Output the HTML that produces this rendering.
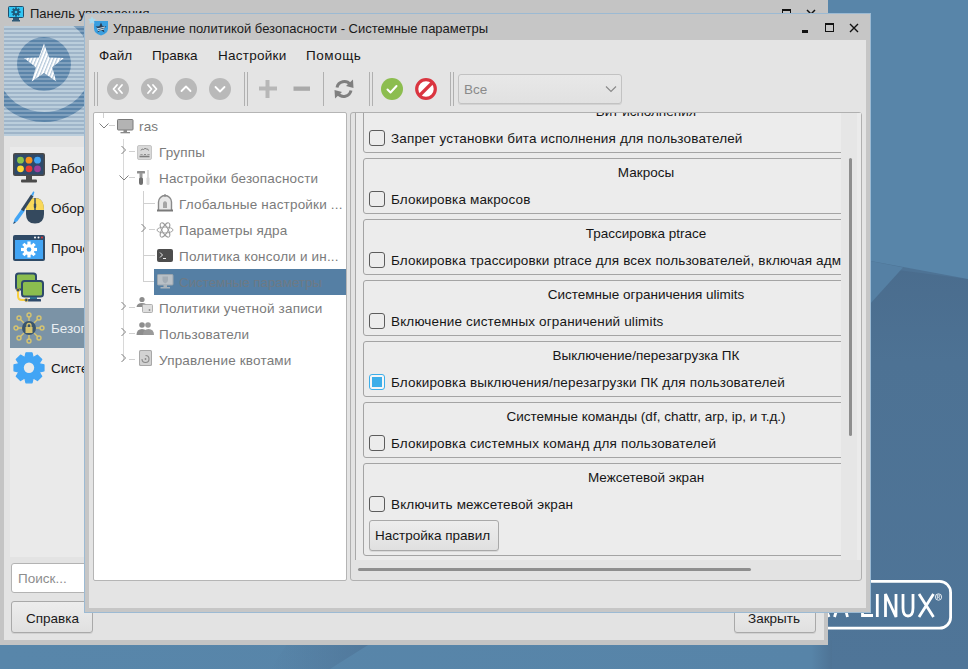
<!DOCTYPE html>
<html><head><meta charset="utf-8">
<style>
*{box-sizing:border-box;margin:0;padding:0}
html,body{width:968px;height:669px;overflow:hidden}
body{position:relative;font-family:"Liberation Sans",sans-serif;font-size:13.5px;line-height:16px;color:#161616;background:#4e7395}
.a{position:absolute}
.t{position:absolute;white-space:nowrap;line-height:16px}
.btn{position:absolute;border:1px solid #a9a9a9;border-radius:3px;background:linear-gradient(#ededed,#e0e0e0);box-shadow:0 1px 0 rgba(0,0,0,.08)}
.gb{position:absolute;left:364px;width:600px;border:1px solid #a4a4a4;border-radius:3px;background:#ececec}
.cb{position:absolute;left:369px;width:16px;height:16px;border:1px solid #5c5c5c;border-radius:3px;background:#ececec}
.tr{position:absolute;white-space:nowrap;line-height:16px;color:#7b7b7b;letter-spacing:0.18px}
.lb{letter-spacing:0.15px}
.gt{position:absolute;white-space:nowrap;line-height:16px;width:564px;text-align:center;left:364px}
</style></head><body>

<!-- desktop -->
<svg class="a" style="left:0;top:0" width="968" height="669" viewBox="0 0 968 669">
  <defs>
    <linearGradient id="dk" x1="0" y1="0" x2="0" y2="1"><stop offset="0" stop-color="#4a6c8d"/><stop offset="0.25" stop-color="#4d7294"/><stop offset="1" stop-color="#4f7598"/></linearGradient>
    <linearGradient id="bs" x1="0" y1="0" x2="1" y2="0"><stop offset="0" stop-color="#5886aa"/><stop offset="0.975" stop-color="#5784a8"/><stop offset="1" stop-color="#4e7395"/></linearGradient>
  </defs>
  <rect width="968" height="669" fill="#4e7395"/>
  <polygon points="820,260 968,279 968,669 820,669" fill="url(#dk)"/>
  <polygon points="0,0 968,0 968,279 871,261 0,150" fill="#5885a9"/>
  <polygon points="860,259 903,267.5 860,315" fill="#5580a4"/>
  <rect x="0" y="640" width="832" height="29" fill="url(#bs)"/>
  <linearGradient id="wg" x1="0" y1="0" x2="1" y2="0"><stop offset="0" stop-color="#4e7396" stop-opacity="0"/><stop offset="1" stop-color="#4e7396" stop-opacity="0.75"/></linearGradient>
  <polygon points="290,640 376,640 330,669 270,669" fill="url(#wg)"/>
</svg>
<!-- ASTRA LINUX logo -->
<svg class="a" style="left:760px;top:570px" width="208" height="70" viewBox="760 570 208 70">
  <rect x="700" y="581.4" width="250.6" height="46.8" rx="11" fill="none" stroke="#fff" stroke-width="2.8"/>
  <g stroke="#fff" stroke-width="2.8" fill="none" stroke-linejoin="miter" stroke-linecap="butt">
    <path d="M812 617 L820 594 L829 617"/>
    <path d="M834.5 617 L841.5 594.5 L847.5 617"/>
    <path d="M862.5 594 V615.5 H873"/>
    <path d="M877.3 594 V617"/>
    <path d="M885.5 617 V594 L896 617 V594"/>
    <path d="M903 594 V608 Q903 616 908 616 Q913 616 913 608 V594"/>
    <path d="M919 594 L933.5 617 M933.5 594 L919 617"/>
  </g>
  <circle cx="938.5" cy="597" r="3.2" fill="none" stroke="#fff" stroke-width="0.8"/><path d="M937.3 599 V595 H938.8 Q940 595 940 596 Q940 597 938.8 597 H937.3 M938.6 597 L940 599" stroke="#fff" stroke-width="0.7" fill="none"/>
</svg>
<!-- ============ BACK WINDOW ============ -->
<div class="a" style="left:0;top:0;width:828px;height:645px;background:#c4c4c4"></div>
<div class="a" style="left:4px;top:26px;width:820px;height:614px;background:#e3e3e3"></div>
<!-- title icon -->
<svg class="a" style="left:8px;top:6px" width="16" height="16" viewBox="0 0 16 16">
  <rect x="0.5" y="0.5" width="15" height="11" rx="1" fill="#31c6f4" stroke="#1f4f6e" stroke-width="1"/>
  <rect x="5" y="12" width="6" height="2" fill="#2f5a78"/><rect x="4" y="14" width="8" height="1.5" fill="#2f5a78"/>
  <g transform="translate(8,6)" fill="#1f5a7a"><circle r="3.2"/><rect x="-0.9" y="-4.6" width="1.8" height="9.2"/><rect x="-4.6" y="-0.9" width="9.2" height="1.8"/><rect x="-0.9" y="-4.6" width="1.8" height="9.2" transform="rotate(45)"/><rect x="-0.9" y="-4.6" width="1.8" height="9.2" transform="rotate(-45)"/><circle r="1.3" fill="#31c6f4"/></g>
</svg>
<div class="t" style="left:30px;top:6px;color:#1a1a1a;font-size:13px">Панель управления</div>
<!-- titlebar buttons (back) -->
<div class="a" style="left:782px;top:9px;width:9px;height:9px;border:1px solid #111;border-top-width:2px"></div>
<svg class="a" style="left:806px;top:9px" width="10" height="10"><path d="M1 1L9 9M9 1L1 9" stroke="#111" stroke-width="1.5"/></svg>

<!-- banner -->
<div class="a" style="left:4px;top:26px;width:100px;height:110px;overflow:hidden;background:repeating-linear-gradient(180deg,#bbcedc 0,#bbcedc 2px,#9fb5c9 2px,#9fb5c9 4px)">
  <svg class="a" style="left:0;top:0" width="100" height="109" viewBox="0 0 100 109">
    <defs>
      <pattern id="hs" width="4" height="4" patternUnits="userSpaceOnUse"><rect width="4" height="2" fill="#7fa0bd"/><rect y="2" width="4" height="2" fill="#5b84a9"/></pattern>
      <pattern id="ds" width="3.2" height="3.2" patternUnits="userSpaceOnUse" patternTransform="rotate(22)"><rect width="3.2" height="3.2" fill="#fff"/><rect width="1.2" height="3.2" fill="#b4c8da"/></pattern>
    </defs>
    <path d="M66.5 -7.9 A53 53 0 1 1 -12.2 28.8" fill="none" stroke="url(#hs)" stroke-width="10"/>
    <circle cx="40" cy="38" r="27" fill="url(#hs)"/>
    <polygon points="40.0,17.5 45.1,31.5 60.0,32.0 48.2,41.2 52.3,55.5 40.0,47.1 27.7,55.5 31.8,41.2 20.0,32.0 34.9,31.5" fill="url(#ds)"/>
  </svg>
</div>
<!-- sidebar panel -->
<div class="a" style="left:10px;top:147px;width:90px;height:410px;background:#eaeaea"></div>
<!-- sidebar icons -->
<svg class="a" style="left:13px;top:153px" width="32" height="32" viewBox="0 0 32 32">
  <rect x="0" y="0" width="32" height="23" rx="2" fill="#4b4b4b"/>
  <rect x="1.6" y="1.6" width="28.8" height="19.8" rx="0.8" fill="#2e4a6b"/>
  <rect x="13" y="23" width="6" height="4.5" fill="#4b4b4b"/><rect x="8" y="26.5" width="16" height="3" rx="1" fill="#4b4b4b"/>
  <circle cx="7.5" cy="7.2" r="3.4" fill="#8bc34a"/><circle cx="16" cy="7.2" r="3.4" fill="#f7931e"/><circle cx="24.5" cy="7.2" r="3.4" fill="#42a5f5"/>
  <circle cx="7.5" cy="15.8" r="3.4" fill="#fdd835"/><circle cx="16" cy="15.8" r="3.4" fill="#e53935"/><circle cx="24.5" cy="15.8" r="3.4" fill="#9b3f9b"/>
</svg>
<div class="t" style="left:51px;top:161px">Рабочий стол</div>
<svg class="a" style="left:10px;top:188px" width="40" height="40" viewBox="10 188 40 40">
  <path d="M26 211 Q26 198 35 198 Q44 198 44 211 V214 Q44 223.5 35 223.5 Q26 223.5 26 214 Z" fill="#34495e"/>
  <path d="M26 210 Q26 198 35 198 Q44 198 44 210 Z" fill="#f9d85a"/>
  <rect x="34.3" y="198" width="1.4" height="12" fill="#34495e"/><rect x="33.8" y="203.5" width="2.4" height="4.5" rx="1" fill="#34495e"/>
  <path d="M13.2 224 L14.5 219 L22 208.5 L25 210.5 L17.5 221 Z" fill="#42a5f5"/>
  <path d="M13.2 224 L14.2 221.5 L15.8 222.6 Z" fill="#34495e"/>
  <path d="M21 209.5 L31 194.5 L33.5 196.3 L23.6 211.3 Z" fill="#34495e"/>
  <path d="M31.2 194.8 L33.2 191.5 Q34.3 191 34.3 192.5 L33.2 196 Z" fill="#42a5f5"/>
</svg>
<div class="t" style="left:51px;top:201px">Оборудование</div>
<svg class="a" style="left:13px;top:235px" width="32" height="26" viewBox="0 0 32 26">
  <rect x="0" y="0" width="32" height="26" rx="2" fill="#2f4a66"/>
  <rect x="2" y="5" width="28" height="19" fill="#42a5f5"/>
  <circle cx="22" cy="2.5" r="1" fill="#fff"/><circle cx="25.5" cy="2.5" r="1" fill="#fff"/><circle cx="29" cy="2.5" r="1" fill="#e53935"/>
  <g transform="translate(16,14.5)" fill="#fff"><circle r="5.5"/><g id="teeth"><rect x="-1.6" y="-8" width="3.2" height="4"/><rect x="-1.6" y="4" width="3.2" height="4"/><rect x="-8" y="-1.6" width="4" height="3.2"/><rect x="4" y="-1.6" width="4" height="3.2"/></g><g transform="rotate(45)"><rect x="-1.6" y="-8" width="3.2" height="4"/><rect x="-1.6" y="4" width="3.2" height="4"/><rect x="-8" y="-1.6" width="4" height="3.2"/><rect x="4" y="-1.6" width="4" height="3.2"/></g><circle r="2.3" fill="#42a5f5"/></g>
</svg>
<div class="t" style="left:51px;top:241px">Прочее</div>
<svg class="a" style="left:10px;top:268px" width="40" height="40" viewBox="10 268 40 40">
  <path d="M18 290 V296 Q18 300 22 300 H27" stroke="#f9d040" stroke-width="2" fill="none"/>
  <rect x="16" y="273.5" width="20" height="16" rx="2.5" fill="#8bbd4f" stroke="#2e4a6b" stroke-width="2"/>
  <rect x="22" y="281" width="21" height="15.5" rx="2.5" fill="#8bbd4f" stroke="#2e4a6b" stroke-width="2"/>
  <rect x="30" y="297" width="7" height="2.5" fill="#2f6f8f"/><rect x="28" y="299" width="13" height="2.5" rx="0.5" fill="#2e4a6b"/>
  <circle cx="18" cy="290" r="1.6" fill="#2e4a6b" stroke="#c9a93a" stroke-width="0.7"/><circle cx="26.3" cy="300" r="1.6" fill="#2e4a6b" stroke="#c9a93a" stroke-width="0.7"/>
</svg>
<div class="t" style="left:51px;top:281px">Сеть</div>
<div class="a" style="left:10px;top:308px;width:90px;height:40px;background:#7b93a6"></div>
<svg class="a" style="left:13px;top:312px" width="32" height="32" viewBox="0 0 32 32">
  <g stroke="#d6c470" stroke-width="1.4" fill="none">
    <path d="M16 4V10M16 22V28M4 16H10M22 16H28M7 7L11 11M25 7L21 11M7 25L11 21M25 25L21 21"/>
    <circle cx="16" cy="3" r="2"/><circle cx="16" cy="29" r="2"/><circle cx="3" cy="16" r="2"/><circle cx="29" cy="16" r="2"/>
    <circle cx="6" cy="6" r="2"/><circle cx="26" cy="6" r="2"/><circle cx="6" cy="26" r="2"/><circle cx="26" cy="26" r="2"/>
  </g>
  <circle cx="16" cy="16" r="7" fill="#3a556e"/>
  <rect x="12.5" y="15" width="7" height="6" fill="#d6c470"/><path d="M14 15V13.5A2 2 0 0 1 18 13.5V15" stroke="#d6c470" stroke-width="1.3" fill="none"/>
</svg>
<div class="t" style="left:51px;top:321px;color:#e9eef2">Безопасность</div>
<svg class="a" style="left:8px;top:348px" width="42" height="42" viewBox="8 348 42 42">
  <polygon points="24.95,357.04 25.96,352.80 32.04,352.80 33.05,357.04 33.75,357.32 37.45,355.05 41.75,359.35 39.48,363.05 39.76,363.75 44.00,364.76 44.00,370.84 39.76,371.85 39.48,372.55 41.75,376.25 37.45,380.55 33.75,378.28 33.05,378.56 32.04,382.80 25.96,382.80 24.95,378.56 24.25,378.28 20.55,380.55 16.25,376.25 18.52,372.55 18.24,371.85 14.00,370.84 14.00,364.76 18.24,363.75 18.52,363.05 16.25,359.35 20.55,355.05 24.25,357.32" fill="#42a5f5" stroke="#42a5f5" stroke-width="1.2" stroke-linejoin="round"/>
  <circle cx="29" cy="367.8" r="5.2" fill="#eaeaea"/>
</svg>
<div class="t" style="left:51px;top:361px">Системные</div>
<!-- search -->
<div class="a" style="left:11px;top:563px;width:110px;height:30px;background:#fff;border:1px solid #b3b3b3;border-radius:3px"></div>
<div class="t" style="left:18px;top:571px;color:#8d8d8d">Поиск...</div>
<div class="btn" style="left:11px;top:601px;width:82px;height:32px"></div>
<div class="t" style="left:26px;top:611px;color:#1a1a1a">Справка</div>
<div class="btn" style="left:734px;top:601px;width:82px;height:32px"></div>
<div class="t" style="left:748px;top:611px;color:#1a1a1a">Закрыть</div>

<!-- ============ FRONT WINDOW ============ -->
<div class="a" style="left:84px;top:13px;width:787px;height:600px;background:#c6c6c6;border:1px solid #9cbad3"></div>
<div class="a" style="left:89px;top:40px;width:777px;height:568px;background:#e4e4e4"></div>
<!-- icon -->
<svg class="a" style="left:88px;top:16px" width="22" height="20" viewBox="0 0 22 20">
  <path d="M6 5 H20 V12.5 Q20 17.5 13 19.5 Q6 17.5 6 12.5 Z" fill="#3a9fe0"/>
  <polygon points="13,6.5 14.6,10.3 18.5,10.4 15.4,12.8 16.5,16.5 13,14.3 9.5,16.5 10.6,12.8 7.5,10.4 11.4,10.3" fill="#2b3f55"/>
  <path d="M9 13 L17 11 M10 14.5 L16 13" stroke="#e8eef4" stroke-width="0.9"/>
  <polygon points="4.00,0.90 5.06,3.04 7.42,3.39 5.71,5.06 6.12,7.41 4.00,6.30 1.88,7.41 2.29,5.06 0.58,3.39 2.94,3.04" fill="#a9dcf2" stroke="#a9dcf2" stroke-width="0.6" stroke-linejoin="round"/>
</svg>
<div class="t" style="left:113px;top:21px;color:#1a1a1a;font-size:13px">Управление политикой безопасности - Системные параметры</div>
<div class="a" style="left:802px;top:30px;width:6px;height:2.5px;background:#111"></div>
<div class="a" style="left:825px;top:23px;width:9px;height:9px;border:1px solid #111;border-top-width:2px"></div>
<svg class="a" style="left:849px;top:23px" width="10" height="10"><path d="M1 1L9 9M9 1L1 9" stroke="#111" stroke-width="1.4"/></svg>

<!-- menu -->
<div class="t" style="left:99px;top:48px">Файл</div>
<div class="t" style="left:152px;top:48px">Правка</div>
<div class="t" style="left:218px;top:48px;letter-spacing:0.25px">Настройки</div>
<div class="t" style="left:306px;top:48px;letter-spacing:0.55px">Помощь</div>

<!-- toolbar -->
<div class="a" style="left:94px;top:72px;width:1px;height:34px;background:#b0b0b0"></div>
<div class="a" style="left:97px;top:72px;width:1px;height:34px;background:#b0b0b0"></div>
<svg class="a" style="left:107px;top:78px" width="124" height="22" viewBox="0 0 124 22">
  <g fill="#b9b9b9"><circle cx="11" cy="11" r="11"/><circle cx="45" cy="11" r="11"/><circle cx="79" cy="11" r="11"/><circle cx="113" cy="11" r="11"/></g>
  <g stroke="#fff" stroke-width="1.8" fill="none" stroke-linecap="round" stroke-linejoin="round">
    <path d="M10 7 L6.5 11 L10 15 M15 7 L11.5 11 L15 15"/>
    <path d="M41 7 L44.5 11 L41 15 M46 7 L49.5 11 L46 15"/>
    <path d="M74.5 13 L79 8.5 L83.5 13"/>
    <path d="M108.5 9 L113 13.5 L117.5 9"/>
  </g>
</svg>
<div class="a" style="left:244px;top:72px;width:1px;height:34px;background:#b0b0b0"></div>
<div class="a" style="left:247px;top:72px;width:1px;height:34px;background:#b0b0b0"></div>
<svg class="a" style="left:258px;top:79px" width="54" height="20" viewBox="0 0 54 20">
  <path d="M7.5 1 H11.5 V7.5 H19 V11.5 H11.5 V19 H7.5 V11.5 H1 V7.5 H7.5 Z" fill="#b7b7b7"/>
  <rect x="35.5" y="7.5" width="16.5" height="4.3" fill="#a9a9a9"/>
</svg>
<div class="a" style="left:323px;top:72px;width:1px;height:34px;background:#b0b0b0"></div>
<svg class="a" style="left:333px;top:78px" width="22" height="22" viewBox="0 0 22 22">
  <g fill="none" stroke="#7f7f7f" stroke-width="3">
    <path d="M4 9.5 A7.5 7.5 0 0 1 17.2 6.5"/>
    <path d="M18 12.5 A7.5 7.5 0 0 1 4.8 15.5"/>
  </g>
  <polygon points="20,1.5 20.5,10 13,8" fill="#7f7f7f"/>
  <polygon points="2,20.5 1.5,12 9,14" fill="#7f7f7f"/>
</svg>
<div class="a" style="left:369px;top:72px;width:1px;height:34px;background:#b0b0b0"></div>
<div class="a" style="left:372px;top:72px;width:1px;height:34px;background:#b0b0b0"></div>
<svg class="a" style="left:381px;top:78px" width="56" height="22" viewBox="0 0 56 22">
  <circle cx="11" cy="11" r="11" fill="#8cbd4f"/>
  <path d="M6.5 11.5 L9.5 14.5 L15.5 8" stroke="#fff" stroke-width="2" fill="none" stroke-linecap="round" stroke-linejoin="round"/>
  <circle cx="45" cy="11" r="9.3" fill="#fff" stroke="#da3540" stroke-width="3.2"/>
  <path d="M38.5 17.5 L51.5 4.5" stroke="#da3540" stroke-width="3.2"/>
</svg>
<div class="a" style="left:450px;top:72px;width:1px;height:34px;background:#b0b0b0"></div>
<div class="a" style="left:453px;top:72px;width:1px;height:34px;background:#b0b0b0"></div>
<div class="btn" style="left:458px;top:74px;width:164px;height:30px;border-color:#c2c2c2;background:linear-gradient(#e8e8e8,#e1e1e1)"></div>
<div class="t" style="left:464px;top:82px;color:#8a8a8a">Все</div>
<svg class="a" style="left:605px;top:85px" width="12" height="8"><path d="M1 1.5 L6 6.5 L11 1.5" stroke="#8a8a8a" stroke-width="1.2" fill="none"/></svg>

<!-- tree -->
<div class="a" style="left:93px;top:112px;width:254px;height:469px;background:#fff;border:1px solid #b5b5b5;border-radius:2px"></div>
<div id="tree">
  <!-- lines -->
  <div class="a" style="left:103px;top:113px;width:1px;height:5px;background:#d0d0d0"></div>
  <div class="a" style="left:123px;top:139px;width:1px;height:222px;background:#d8d8d8"></div>
  <div class="a" style="left:143px;top:191px;width:1px;height:90px;background:#d0d0d0"></div>
  <div class="a" style="left:143px;top:203px;width:12px;height:1px;background:#d0d0d0"></div>
  <div class="a" style="left:143px;top:255px;width:12px;height:1px;background:#d0d0d0"></div>
  <div class="a" style="left:143px;top:281px;width:12px;height:1px;background:#d0d0d0"></div>
  <div class="a" style="left:109px;top:125px;width:6px;height:1px;background:#d0d0d0"></div>
  <div class="a" style="left:129px;top:151px;width:6px;height:1px;background:#d0d0d0"></div>
  <div class="a" style="left:129px;top:177px;width:6px;height:1px;background:#d0d0d0"></div>
  <div class="a" style="left:149px;top:229px;width:6px;height:1px;background:#d0d0d0"></div>
  <div class="a" style="left:129px;top:307px;width:6px;height:1px;background:#d0d0d0"></div>
  <div class="a" style="left:129px;top:333px;width:6px;height:1px;background:#d0d0d0"></div>
  <div class="a" style="left:129px;top:359px;width:6px;height:1px;background:#d0d0d0"></div>
  <!-- selection -->
  <div class="a" style="left:154px;top:269px;width:192px;height:26px;background:#557fa4"></div>
  <svg class="a" style="left:95px;top:115px" width="250" height="260" viewBox="0 0 250 260">
    <g stroke="#7e7e7e" stroke-width="1" fill="none">
      <path d="M4.5 8.5 L9 13 L13.5 8.5"/>
      <path d="M26.5 31 L30.5 35 L26.5 39"/>
      <path d="M24.5 60.5 L29 65 L33.5 60.5"/>
      <path d="M46.5 109 L50.5 113 L46.5 117"/>
      <path d="M26.5 187 L30.5 191 L26.5 195"/>
      <path d="M26.5 213 L30.5 217 L26.5 221"/>
      <path d="M26.5 239 L30.5 243 L26.5 247"/>
    </g>
    <!-- ras monitor -->
    <rect x="22.5" y="4.5" width="15.5" height="10.5" rx="0.8" fill="#b3b3b3" stroke="#7a7a7a" stroke-width="1"/><g fill="#8a8a8a"><rect x="28.5" y="15" width="3.5" height="2"/><rect x="25.5" y="17" width="9.5" height="1.3"/></g>
    <!-- groups -->
    <rect x="42.5" y="30.5" width="14" height="14" rx="1.5" fill="#d9d9d9" stroke="#c6c6c6"/>
    <path d="M46 35.5 Q47 33 48.5 34.5 Q50 32.5 51.5 34 Q53 33.5 53.5 35.5" stroke="#7d7d7d" stroke-width="1" fill="none"/>
    <path d="M44.5 41.5 h10" stroke="#7d7d7d" stroke-width="1.6"/>
    <path d="M45.5 40 Q46.5 38 47.5 40 M49 40 Q50 38 51 40 M52.5 40 Q53.5 38 54.5 40" stroke="#8a8a8a" stroke-width="1" fill="none"/>
    <!-- tools -->
    <rect x="42" y="56" width="8" height="2.5" rx="0.5" fill="#8f8f8f"/><rect x="44.5" y="58" width="3" height="4" fill="#9a9a9a"/><rect x="44" y="62" width="4" height="8" rx="2" fill="#6f6f6f"/>
    <rect x="52.3" y="55" width="1.4" height="8" fill="#cfcfcf"/><rect x="51.5" y="62" width="3" height="8" rx="1.5" fill="#d8d8d8"/>
    <!-- global bell -->
    <path d="M63.5 95 V87 A6.5 6.5 0 0 1 76.5 87 V95" fill="#e8e8e8" stroke="#8a8a8a" stroke-width="1.4"/><rect x="62" y="94.5" width="16" height="2" fill="#7a7a7a"/><circle cx="70" cy="80.5" r="1.2" fill="#8a8a8a"/>
    <path d="M68 87.5 Q70 85 72 87.5 V93 H68 Z" fill="#a5a5a5"/>
    <!-- atom -->
    <g stroke="#9a9a9a" stroke-width="0.9" fill="none"><ellipse cx="70" cy="115" rx="8" ry="3"/><ellipse cx="70" cy="115" rx="8" ry="3" transform="rotate(60 70 115)"/><ellipse cx="70" cy="115" rx="8" ry="3" transform="rotate(-60 70 115)"/></g>
    <!-- console -->
    <rect x="62" y="134" width="16" height="13" rx="2" fill="#4d4d4d"/><path d="M65 137.5 L67.5 140 L65 142.5 M68 143.5 H71" stroke="#fff" stroke-width="0.9" fill="none"/>
    <!-- system params monitor (selected) -->
    <rect x="62.5" y="159.5" width="15.5" height="10.5" rx="0.8" fill="#b9c0c6" stroke="#9aa5ae" stroke-width="1"/><g fill="#aab3ba"><rect x="68.5" y="170" width="3.5" height="2"/><rect x="65.5" y="172" width="9.5" height="1.5"/></g>
    <path d="M67.5 161.5 H73 V165 Q73 167.5 70.25 168.5 Q67.5 167.5 67.5 165 Z" fill="#a3acb4"/>
    <!-- account policy -->
    <circle cx="47" cy="184.5" r="2.6" fill="#8d8d8d"/><path d="M41.5 192 Q42 188 47 188 Q52 188 52 192 Z" fill="#8d8d8d"/>
    <rect x="47.5" y="189.5" width="10" height="8" rx="1" fill="#dedede" stroke="#a8a8a8" stroke-width=".9"/><circle cx="54.5" cy="195" r="0.9" fill="#8d8d8d"/>
    <!-- users -->
    <circle cx="47" cy="210" r="2.8" fill="#8d8d8d"/><circle cx="53" cy="210" r="2.8" fill="#9a9a9a"/>
    <path d="M41.5 220 Q41.5 214 47 214 Q52.5 214 52.5 220 Z" fill="#8d8d8d"/><path d="M48 220 Q48 214 53.5 214 Q59 214 59 220 Z" fill="#9a9a9a"/>
    <!-- quota disk -->
    <rect x="44" y="235" width="13" height="16" rx="1.5" fill="#a8a8a8"/><rect x="45" y="236" width="11" height="14" rx="1" fill="#d2d2d2"/>
    <path d="M47 244 A3.5 3.5 0 1 0 50.5 240.5" stroke="#8a8a8a" stroke-width="1.1" fill="none"/><circle cx="50.5" cy="244" r="0.9" fill="#8a8a8a"/>
  </svg>
  <div class="tr" style="left:139px;top:119px">ras</div>
  <div class="tr" style="left:159px;top:145px">Группы</div>
  <div class="tr" style="left:159px;top:171px">Настройки безопасности</div>
  <div class="tr" style="left:179px;top:197px">Глобальные настройки ...</div>
  <div class="tr" style="left:179px;top:223px">Параметры ядра</div>
  <div class="tr" style="left:179px;top:249px">Политика консоли и ин...</div>
  <div class="tr" style="left:179px;top:275px;color:#6d7a85;letter-spacing:-0.1px">Системные параметры</div>
  <div class="tr" style="left:159px;top:301px">Политики учетной записи</div>
  <div class="tr" style="left:159px;top:327px">Пользователи</div>
  <div class="tr" style="left:159px;top:353px">Управление квотами</div>
</div>

<!-- right panel -->
<div class="a" style="left:350px;top:112px;width:512px;height:469px;border:1px solid #b0b0b0;border-radius:3px;background:#e3e3e3"></div>
<div class="a" style="left:355px;top:113px;width:506px;height:447px;border-left:1px solid #a9a9a9;background:#ebebeb"></div>
<div class="a" style="left:841px;top:113px;width:16px;height:447px;background:#e6e6e6"></div>
<div id="vp" class="a" style="left:356px;top:113px;width:485px;height:447px;overflow:hidden">
  <div class="gb" style="left:7px;top:-16px;height:56px"></div>
  <div class="gt" style="left:7px;width:566px;top:-9px">Бит исполнения</div>
  <div class="cb" style="left:13px;top:17px"></div>
  <div class="t lb" style="left:35px;top:18px">Запрет установки бита исполнения для пользователей</div>
  <div class="gb" style="left:7px;top:45px;height:56px"></div>
  <div class="gt" style="left:7px;width:566px;top:52px">Макросы</div>
  <div class="cb" style="left:13px;top:78px"></div>
  <div class="t lb" style="left:35px;top:79px">Блокировка макросов</div>
  <div class="gb" style="left:7px;top:106px;height:56px"></div>
  <div class="gt" style="left:7px;width:566px;top:113px">Трассировка ptrace</div>
  <div class="cb" style="left:13px;top:139px"></div>
  <div class="t lb" style="left:35px;top:140px">Блокировка трассировки ptrace для всех пользователей, включая администраторов</div>
  <div class="gb" style="left:7px;top:167px;height:56px"></div>
  <div class="gt" style="left:7px;width:566px;top:174px">Системные ограничения ulimits</div>
  <div class="cb" style="left:13px;top:200px"></div>
  <div class="t lb" style="left:35px;top:201px">Включение системных ограничений ulimits</div>
  <div class="gb" style="left:7px;top:228px;height:56px"></div>
  <div class="gt" style="left:7px;width:566px;top:235px">Выключение/перезагрузка ПК</div>
  <div class="cb" style="left:13px;top:261px;border-color:#3daee9;background:#f6f6f6"><div class="a" style="left:2px;top:2px;width:10px;height:10px;background:#3daee9"></div></div>
  <div class="t lb" style="left:35px;top:262px">Блокировка выключения/перезагрузки ПК для пользователей</div>
  <div class="gb" style="left:7px;top:289px;height:56px"></div>
  <div class="gt" style="left:7px;width:566px;top:296px">Системные команды (df, chattr, arp, ip, и т.д.)</div>
  <div class="cb" style="left:13px;top:322px"></div>
  <div class="t lb" style="left:35px;top:323px">Блокировка системных команд для пользователей</div>
  <div class="gb" style="left:7px;top:350px;height:93px"></div>
  <div class="gt" style="left:7px;width:566px;top:357px">Межсетевой экран</div>
  <div class="cb" style="left:13px;top:383px"></div>
  <div class="t lb" style="left:35px;top:384px">Включить межсетевой экран</div>
  <div class="btn" style="left:13px;top:407px;width:130px;height:31px"></div>
  <div class="t" style="left:19px;top:415px">Настройка правил</div>
</div>
<div class="a" style="left:849px;top:158px;width:3px;height:278px;border-radius:2px;background:#8e8e8e"></div>
<div class="a" style="left:358px;top:568px;width:393px;height:3px;border-radius:2px;background:#8e8e8e"></div>

</body></html>
